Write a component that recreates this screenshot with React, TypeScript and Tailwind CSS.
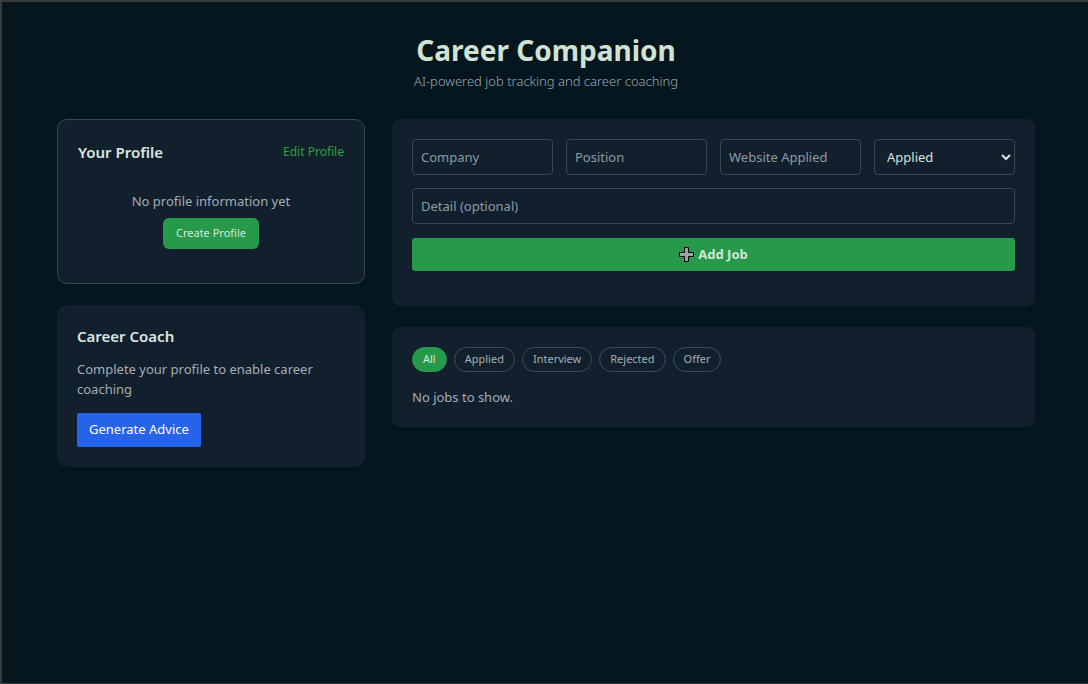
const font = { fontFamily: '"Noto Sans", "Open Sans", sans-serif' };

function PlusCursor() {
  return (
    <svg width="15" height="15" viewBox="0 0 15 15" className="mr-1">
      <path
        d="M5.5 0.5h4v5h5v4h-5v5h-4v-5h-5v-4h5z"
        fill="#9ca3a6"
        stroke="#000"
        strokeWidth="1"
      />
    </svg>
  );
}

const filters = ["All", "Applied", "Interview", "Rejected", "Offer"];

export default function App() {
  return (
    <div
      style={font}
      className="h-[684px] w-[1088px] overflow-hidden border-t-2 border-l-2 border-b border-[#3a3a3a] bg-[#06161e] pl-[2px]"
    >
      {/* header */}
      <div className="pt-[29px] text-center">
        <h1 className="text-[28px] font-bold leading-[38px] text-[#cfe3d4]">Career Companion</h1>
        <p className="mt-[3px] text-[13px] font-light leading-[18px] text-[#9aa9b0]">
          AI-powered job tracking and career coaching
        </p>
      </div>

      <div className="mx-auto mt-[29px] flex w-[978px] gap-[27px]">
        {/* left column */}
        <div className="flex w-[308px] flex-col gap-[21px]">
          <div className="h-[165px] rounded-[10px] border border-[#364b4f] bg-[#12202d] px-5 pt-[21px]">
            <div className="flex items-center justify-between">
              <h2 className="text-[15px] font-semibold text-[#dbe6e0]">Your Profile</h2>
              <button className="text-[12px] text-[#2ea043]">Edit Profile</button>
            </div>
            <div className="mt-[28px] flex flex-col items-center">
              <p className="text-[13px] text-[#a3aeb4]">No profile information yet</p>
              <button className="mt-[7px] h-[31px] rounded-[6px] bg-[#26994a] px-[13px] text-[11px] text-[#d7e8dc]">
                Create Profile
              </button>
            </div>
          </div>

          <div className="h-[162px] rounded-[10px] bg-[#12202d] px-5 pt-5">
            <h2 className="text-[15px] font-semibold text-[#dbe6e0]">Career Coach</h2>
            <p className="mt-[11px] text-[13px] leading-[20px] text-[#a3aeb4]">
              Complete your profile to enable career coaching
            </p>
            <button className="mt-[14px] h-[34px] rounded-[2px] bg-[#2563eb] px-[12px] text-[13px] text-white">
              Generate Advice
            </button>
          </div>
        </div>

        {/* right column */}
        <div className="flex flex-1 flex-col gap-[21px]">
          <div className="h-[187px] rounded-[8px] bg-[#12202d] px-5 pt-5">
            <div className="grid grid-cols-4 gap-[13px]">
              {["Company", "Position", "Website Applied"].map((p) => (
                <input
                  key={p}
                  placeholder={p}
                  className="h-[36px] rounded-[4px] border border-[#35494f] bg-[#12202d] px-2 text-[13px] text-[#d0dad6] placeholder-[#8d9ba1] outline-none"
                />
              ))}
              <select className="h-[36px] rounded-[4px] border border-[#35494f] bg-[#12202d] px-2 text-[13px] text-[#d9e3de] outline-none">
                <option>Applied</option>
                <option>Interview</option>
                <option>Rejected</option>
                <option>Offer</option>
              </select>
            </div>
            <input
              placeholder="Detail (optional)"
              className="mt-[13px] h-[36px] w-full rounded-[4px] border border-[#35494f] bg-[#12202d] px-2 text-[13px] text-[#d0dad6] placeholder-[#8d9ba1] outline-none"
            />
            <button className="mt-[14px] flex h-[33px] w-full items-center justify-center rounded-[3px] bg-[#26994a] text-[13px] font-bold text-[#d2e6d8]">
              <PlusCursor />
              Add Job
            </button>
          </div>

          <div className="h-[100px] rounded-[8px] bg-[#12202d] px-5 pt-5">
            <div className="flex gap-[7px]">
              {filters.map((f, i) => (
                <button
                  key={f}
                  className={
                    i === 0
                      ? "h-[25px] rounded-full border border-[#26994a] bg-[#26994a] px-[10px] text-[11px] text-[#d7e8dc]"
                      : "h-[25px] rounded-full border border-[#3a5052] px-[10px] text-[11px] text-[#a3aeb4]"
                  }
                >
                  {f}
                </button>
              ))}
            </div>
            <p className="mt-[16px] text-[13px] text-[#a3aeb4]">No jobs to show.</p>
          </div>
        </div>
      </div>
    </div>
  );
}
